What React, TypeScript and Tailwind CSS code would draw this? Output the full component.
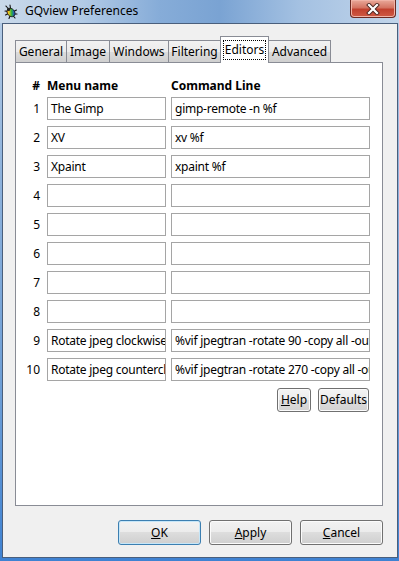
import type { ReactNode } from "react";

const tabs = [
    { label: "General", w: "w-[52px]" },
    { label: "Image", w: "w-[44px]" },
    { label: "Windows", w: "w-[60px]" },
    { label: "Filtering", w: "w-[53px]" },
    { label: "Editors", w: "w-[49px]", active: true },
    { label: "Advanced", w: "w-[63px]" },
];

const editors = [
    { name: "The Gimp", cmd: "gimp-remote -n %f" },
    { name: "XV", cmd: "xv %f" },
    { name: "Xpaint", cmd: "xpaint %f" },
    { name: "", cmd: "" },
    { name: "", cmd: "" },
    { name: "", cmd: "" },
    { name: "", cmd: "" },
    { name: "", cmd: "" },
    { name: "Rotate jpeg clockwise", cmd: "%vif jpegtran -rotate 90 -copy all -outfile %p_tmp %p" },
    { name: "Rotate jpeg counterclockwise", cmd: "%vif jpegtran -rotate 270 -copy all -outfile %p_tmp %p" },
];

function AppIcon() {
    return (
        <svg width="16" height="16" viewBox="0 0 16 16">
            <defs>
                <linearGradient id="bug" x1="0" y1="0" x2="1" y2="1">
                    <stop offset="0" stopColor="#e02020" />
                    <stop offset="0.3" stopColor="#f0d020" />
                    <stop offset="0.55" stopColor="#30b040" />
                    <stop offset="0.8" stopColor="#2050d0" />
                    <stop offset="1" stopColor="#8030a0" />
                </linearGradient>
            </defs>
            <g stroke="#111" strokeWidth="1.1" fill="none" strokeLinecap="round">
                <path d="M3 2 L5.5 5" />
                <path d="M7 1 L7.5 4.5" />
                <path d="M2 7 L5 7.5" />
                <path d="M2.5 11 L5.5 9.5" />
                <path d="M13.5 6 L10.5 7.5" />
                <path d="M14 10 L11 10" />
                <path d="M12 14 L10 11.5" />
                <path d="M6 14.5 L7 12" />
            </g>
            <ellipse cx="8" cy="8.5" rx="3.6" ry="4.6" transform="rotate(-40 8 8.5)" fill="url(#bug)" stroke="#111" strokeWidth="0.8" />
            <circle cx="5.6" cy="5.4" r="1.6" fill="#222" />
        </svg>
    );
}

function WinButton({ children, primary }: { children: ReactNode; primary?: boolean }) {
    return (
        <div
            className={`flex h-[25px] w-[83px] items-center justify-center rounded-[3px] border bg-[linear-gradient(#f2f2f2_0%,#ebebeb_50%,#dddddd_50%,#cfcfcf_100%)] ${
                primary ? "border-[#3c7fb1] shadow-[inset_0_0_0_1px_#c6e6f8]" : "border-[#707070] shadow-[inset_0_0_0_1px_#fbfbfb]"
            }`}
        >
            {children}
        </div>
    );
}

function GtkButton({ children, w }: { children: ReactNode; w: string }) {
    return (
        <div
            className={`flex h-[24px] ${w} items-center justify-center rounded-[3px] border border-[#707070] bg-[linear-gradient(#f4f4f4_0%,#ebebeb_50%,#dddddd_50%,#d2d2d2_100%)] shadow-[inset_0_0_0_1px_#fbfbfb]`}
        >
            {children}
        </div>
    );
}

function Field({ text, w }: { text: string; w: string }) {
    return (
        <div className={`flex h-[23px] ${w} items-center overflow-hidden whitespace-nowrap border border-[#a5a5a5] bg-white pl-[3px] tracking-[-0.25px]`}>
            {text}
        </div>
    );
}

export default function App() {
    return (
        <div
            className="flex h-[561px] w-[399px] flex-col overflow-hidden bg-[linear-gradient(180deg,#b9cfe7_0%,#8fb3dc_30%,#6d9ed6_70%,#3f82d2_100%)] text-[12px] text-black"
            style={{ fontFamily: '"Noto Sans", "Liberation Sans", sans-serif' }}
        >
            {/* title bar */}
            <div className="flex h-[23px] shrink-0 items-start bg-[linear-gradient(90deg,#c9d9ea_0%,#b3cbe6_20%,#86acd8_40%,#7aa3d3_55%,#a4c1e2_75%,#c2d5ea_100%)]">
                <div className="ml-[3px] mt-[4px]">
                    <AppIcon />
                </div>
                <div className="ml-[6px] mt-[3px] text-[12px] leading-[16px] text-black">GQview Preferences</div>
                <div className="ml-auto mr-[3px] flex h-[18px] w-[46px] items-center justify-center rounded-b-[4px] border border-t-0 border-[#6b2a22] bg-[linear-gradient(180deg,#e9a99a_0%,#d47462_45%,#c1412e_55%,#cf5a44_100%)] shadow-[inset_0_0_0_1px_#f0b3a6]">
                    <svg width="14" height="12" viewBox="0 0 14 12">
                        <path d="M3 2 L11 10 M11 2 L3 10" stroke="#4a2520" strokeWidth="4" strokeLinecap="square" />
                        <path d="M3 2 L11 10 M11 2 L3 10" stroke="#ffffff" strokeWidth="2.2" strokeLinecap="square" />
                    </svg>
                </div>
            </div>

            {/* client area */}
            <div className="mb-[3px] ml-[2px] mr-[1px] flex flex-1 flex-col border border-[#4a5f7c] bg-[#f0f0f0]">
                <div className="flex h-[38px] items-end pl-[12px]">
                    {tabs.map((t, i) =>
                        t.active ? (
                            <div
                                key={t.label}
                                className={`relative z-10 -mb-px -ml-px flex h-[27px] ${t.w} items-start justify-center border border-b-0 border-[#898c95] bg-white pt-[3px]`}
                            >
                                <span className="border border-dotted border-black px-[1px] leading-[18px]">{t.label}</span>
                            </div>
                        ) : (
                            <div
                                key={t.label}
                                className={`flex h-[22px] ${t.w} ${i > 0 ? "-ml-px" : ""} items-center justify-center border border-b-0 border-[#898c95] bg-[linear-gradient(180deg,#f2f2f2_0%,#ebebeb_50%,#dddddd_50%,#cfcfcf_100%)]`}
                            >
                                {t.label}
                            </div>
                        ),
                    )}
                </div>

                <div className="ml-[12px] flex h-[444px] w-[368px] flex-col border border-[#898c95] bg-white pt-[11px]">
                    <div className="flex h-[23px] items-center font-bold">
                        <div className="w-[31px] pr-[7px] text-right">#</div>
                        <div className="w-[119px]">Menu name</div>
                        <div className="ml-[5px]">Command Line</div>
                    </div>
                    <div className="flex flex-col gap-[6px]">
                        {editors.map((e, i) => (
                            <div key={i} className="flex items-center">
                                <div className="w-[31px] pr-[7px] text-right">{i + 1}</div>
                                <Field text={e.name} w="w-[119px]" />
                                <div className="ml-[5px]">
                                    <Field text={e.cmd} w="w-[199px]" />
                                </div>
                            </div>
                        ))}
                    </div>
                    <div className="mt-[7px] flex justify-end gap-[7px] pr-[13px]">
                        <GtkButton w="w-[34px]">
                            <span>
                                <span className="underline">H</span>elp
                            </span>
                        </GtkButton>
                        <GtkButton w="w-[51px]">Defaults</GtkButton>
                    </div>
                </div>

                <div className="mt-[14px] flex justify-end gap-[8px] pr-[14px]">
                    <WinButton primary>
                        <span>
                            <span className="underline">O</span>K
                        </span>
                    </WinButton>
                    <WinButton>
                        <span>
                            <span className="underline">A</span>pply
                        </span>
                    </WinButton>
                    <WinButton>
                        <span>
                            <span className="underline">C</span>ancel
                        </span>
                    </WinButton>
                </div>
            </div>
        </div>
    );
}
